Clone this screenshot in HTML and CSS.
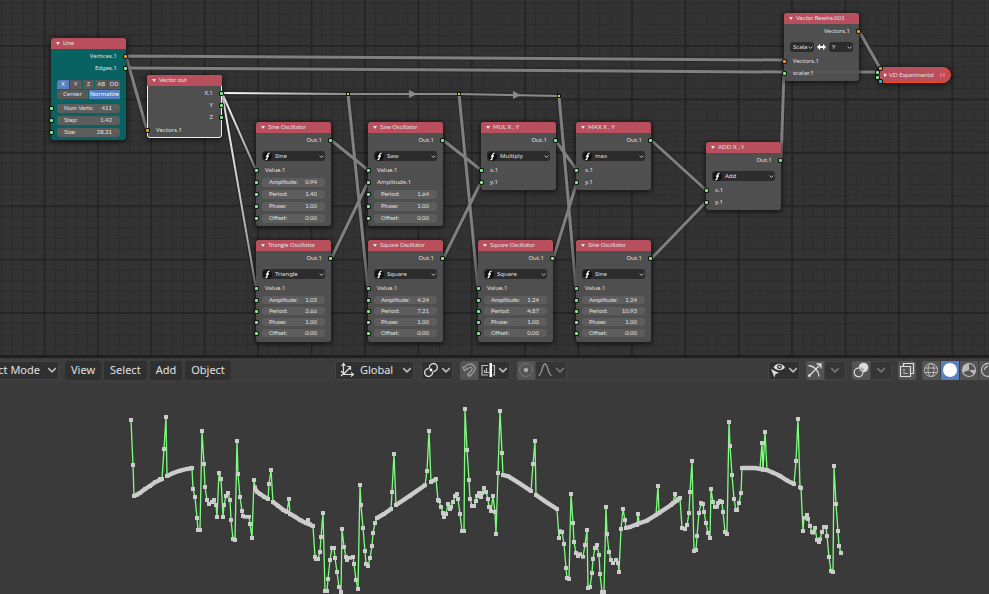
FILE: index.html
```html
<!DOCTYPE html>
<html lang="en">
<head>
<meta charset="utf-8">
<title>Node editor and 3D viewport</title>
<link rel="stylesheet" href="styles.css">
</head>
<body>
<svg class="symbols" aria-hidden="true">
  <symbol id="fn" viewBox="0 0 10 10"><circle cx="5" cy="5" r="5" fill="#111"/><path d="M7.3 1.6C5.800 1.200 5.400 2 5.200 3.300L4.500 7.200C4.300 8.300 3.600 8.700 2.800 8.300M3.200 4.500H6.700" fill="none" stroke="#fff" stroke-width="1.500"/></symbol>
  <symbol id="chev" viewBox="0 0 8 8"><path d="M1 2.500L4 5.500L7 2.500" fill="none" stroke="currentColor" stroke-width="1.300"/></symbol>
</svg>
<main class="app">
  <section class="node-editor" aria-label="Node editor">
    <svg class="links" width="100%" height="100%" aria-hidden="true">
      <defs>
        <pattern id="grid" x="44.500" y="46" width="53.400" height="53.400" patternUnits="userSpaceOnUse">
          <path d="M10.700 0V53.400M21.400 0V53.400M32 0V53.400M42.700 0V53.400M0 10.700H53.400M0 21.400H53.400M0 32H53.400M0 42.700H53.400" stroke="#2b2b2b" stroke-width="1"/>
          <path d="M0 0V53.400M53.400 0V53.400M0 0H53.400M0 53.400H53.400" stroke="#202020" stroke-width="1.400"/>
        </pattern>
        <linearGradient id="fade" gradientUnits="userSpaceOnUse" x1="222" y1="0" x2="348" y2="0"><stop offset="0" stop-color="#fff"/><stop offset="1" stop-color="#8a8a8a"/></linearGradient>
        <linearGradient id="fadeDown" gradientUnits="userSpaceOnUse" x1="222" y1="0" x2="256" y2="0"><stop offset="0" stop-color="#fff"/><stop offset="1" stop-color="#8a8a8a"/></linearGradient>
      </defs>
      <rect width="100%" height="100%" fill="url(#grid)"/>
      <g fill="none">
        <path class="wire-edge" d="M126 56L784 60M126 68L784 72H877M126 56L147 130M222 93L348 94H459L559 96M222 93L256 170M222 93L256 288M348 94L368 288M459 94L478 288M559 96L576 288M331 140L368 170M331 259L368 182M443 140L481 170M443 259L481 182M555 140L577 170M553 259L577 182M651 140L706 190M651 259L706 202M781 161L784 72M859 31L880 68"/>
        <path class="wire" d="M126 56L784 60M126 68L784 72H877M126 56L147 130M348 94L368 288M459 94L478 288M559 96L576 288M331 140L368 170M331 259L368 182M443 140L481 170M443 259L481 182M555 140L577 170M553 259L577 182M651 140L706 190M651 259L706 202M781 161L784 72M859 31L880 68"/>
        <path d="M348 94H459L559 96" stroke="#8a8a8a" stroke-width="2"/>
        <path d="M222 93L348 94" stroke="url(#fade)" stroke-width="2"/>
        <path d="M222 93L256 170M222 93L256 288" stroke="url(#fadeDown)" stroke-width="2"/>
      </g>
      <path d="M409 90L417 94L409 98ZM513 91L521 95L513 99Z" fill="#8a8a8a"/>
      <g fill="#d6d65a" stroke="#111"><rect x="346.500" y="92.500" width="3" height="3"/><rect x="457.500" y="92.500" width="3" height="3"/><rect x="557.500" y="94.500" width="3" height="3"/></g>
    </svg>

    <article class="node teal at-line">
      <h2>Line</h2>
      <div class="body">
        <p class="row out vec">Vertices.1</p>
        <p class="row out">Edges.1</p>
        <div class="toggles">
          <div><button class="on">X</button><button>Y</button><button>Z</button><button>AB</button><button>OD</button></div>
          <div><button>Center</button><button class="on">Normalize</button></div>
        </div>
        <label class="row in field">Num Verts:<input value="411"></label>
        <label class="row in field">Step:<input value="1.42"></label>
        <label class="row in field">Size:<input value="28.31"></label>
      </div>
    </article>

    <article class="node selected at-vector-out">
      <h2>Vector out</h2>
      <div class="body">
        <p class="row out">X.1</p>
        <p class="row out">Y</p>
        <p class="row out">Z</p>
        <p class="row in vec">Vectors.1</p>
      </div>
    </article>

    <article class="node at-sine">
      <h2>Sine Oscillator</h2>
      <div class="body">
        <p class="row out">Out.1</p>
        <div class="pick"><svg class="fn"><use href="#fn"/></svg><select aria-label="Function"><option>Sine</option></select><svg class="chev"><use href="#chev"/></svg></div>
        <p class="row in">Value.1</p>
        <label class="row in field">Amplitude:<input value="0.94"></label>
        <label class="row in field">Period:<input value="1.40"></label>
        <label class="row in field">Phase:<input value="1.00"></label>
        <label class="row in field">Offset:<input value="0.00"></label>
      </div>
    </article>

    <article class="node at-saw">
      <h2>Saw Oscillator</h2>
      <div class="body">
        <p class="row out">Out.1</p>
        <div class="pick"><svg class="fn"><use href="#fn"/></svg><select aria-label="Function"><option>Saw</option></select><svg class="chev"><use href="#chev"/></svg></div>
        <p class="row in">Value.1</p>
        <p class="row in">Amplitude.1</p>
        <label class="row in field">Period:<input value="1.64"></label>
        <label class="row in field">Phase:<input value="1.00"></label>
        <label class="row in field">Offset:<input value="0.00"></label>
      </div>
    </article>

    <article class="node at-mul">
      <h2>MUL X , Y</h2>
      <div class="body">
        <p class="row out">Out.1</p>
        <div class="pick"><svg class="fn"><use href="#fn"/></svg><select aria-label="Function"><option>Multiply</option></select><svg class="chev"><use href="#chev"/></svg></div>
        <p class="row in">x.1</p>
        <p class="row in">y.1</p>
      </div>
    </article>

    <article class="node at-max">
      <h2>MAX X , Y</h2>
      <div class="body">
        <p class="row out">Out.1</p>
        <div class="pick"><svg class="fn"><use href="#fn"/></svg><select aria-label="Function"><option>max</option></select><svg class="chev"><use href="#chev"/></svg></div>
        <p class="row in">x.1</p>
        <p class="row in">y.1</p>
      </div>
    </article>

    <article class="node compact at-triangle">
      <h2>Triangle Oscillator</h2>
      <div class="body">
        <p class="row out">Out.1</p>
        <div class="pick"><svg class="fn"><use href="#fn"/></svg><select aria-label="Function"><option>Triangle</option></select><svg class="chev"><use href="#chev"/></svg></div>
        <p class="row in">Value.1</p>
        <label class="row in field">Amplitude:<input value="1.03"></label>
        <label class="row in field">Period:<input value="2.66"></label>
        <label class="row in field">Phase:<input value="1.00"></label>
        <label class="row in field">Offset:<input value="0.00"></label>
      </div>
    </article>

    <article class="node compact at-square-a">
      <h2>Square Oscillator</h2>
      <div class="body">
        <p class="row out">Out.1</p>
        <div class="pick"><svg class="fn"><use href="#fn"/></svg><select aria-label="Function"><option>Square</option></select><svg class="chev"><use href="#chev"/></svg></div>
        <p class="row in">Value.1</p>
        <label class="row in field">Amplitude:<input value="4.24"></label>
        <label class="row in field">Period:<input value="7.21"></label>
        <label class="row in field">Phase:<input value="1.00"></label>
        <label class="row in field">Offset:<input value="0.00"></label>
      </div>
    </article>

    <article class="node compact at-square-b">
      <h2>Square Oscillator</h2>
      <div class="body">
        <p class="row out">Out.1</p>
        <div class="pick"><svg class="fn"><use href="#fn"/></svg><select aria-label="Function"><option>Square</option></select><svg class="chev"><use href="#chev"/></svg></div>
        <p class="row in">Value.1</p>
        <label class="row in field">Amplitude:<input value="1.24"></label>
        <label class="row in field">Period:<input value="4.87"></label>
        <label class="row in field">Phase:<input value="1.00"></label>
        <label class="row in field">Offset:<input value="0.00"></label>
      </div>
    </article>

    <article class="node compact at-sine-b">
      <h2>Sine Oscillator</h2>
      <div class="body">
        <p class="row out">Out.1</p>
        <div class="pick"><svg class="fn"><use href="#fn"/></svg><select aria-label="Function"><option>Sine</option></select><svg class="chev"><use href="#chev"/></svg></div>
        <p class="row in">Value.1</p>
        <label class="row in field">Amplitude:<input value="1.24"></label>
        <label class="row in field">Period:<input value="10.93"></label>
        <label class="row in field">Phase:<input value="1.00"></label>
        <label class="row in field">Offset:<input value="0.00"></label>
      </div>
    </article>

    <article class="node at-add">
      <h2>ADD X , Y</h2>
      <div class="body">
        <p class="row out">Out.1</p>
        <div class="pick"><svg class="fn"><use href="#fn"/></svg><select aria-label="Function"><option>Add</option></select><svg class="chev"><use href="#chev"/></svg></div>
        <p class="row in">x.1</p>
        <p class="row in">y.1</p>
      </div>
    </article>

    <article class="node at-rewire">
      <h2>Vector Rewire.001</h2>
      <div class="body">
        <p class="row out vec">Vectors.1</p>
        <div class="swap">
          <div class="pick"><select aria-label="From"><option>Scala</option></select><svg class="chev"><use href="#chev"/></svg></div>
          <svg class="arrows" viewBox="0 0 9 6"><path d="M0 3L3 0V2H6V0L9 3L6 6V4H3V6Z" fill="#fff"/></svg>
          <div class="pick"><select aria-label="To"><option>Y</option></select><svg class="chev"><use href="#chev"/></svg></div>
        </div>
        <p class="row in vec">Vectors.1</p>
        <p class="row in">scalar.1</p>
      </div>
    </article>

    <article class="collapsed">
      <i class="dot d1"></i><i class="dot d2"></i><i class="dot d3"></i><i class="dot d4"></i>
      <h2>VD Experimental</h2>
      <span class="grip"></span>
    </article>
  </section>

  <section class="viewport" aria-label="3D viewport">
    <header class="bar">
      <nav class="group menus">
        <div class="drop mode"><select aria-label="Mode"><option>Object Mode</option></select><svg class="chev"><use href="#chev"/></svg></div>
        <button>View</button><button>Select</button><button>Add</button><button>Object</button>
      </nav>
      <div class="group tools">
        <div class="drop orient">
          <svg class="icon" viewBox="0 0 16 16"><path d="M4.500 2V12.500H14M4.500 12.500L11 5.500M2.500 4L4.500 1.500L6.500 4M12 10.500L14.500 12.500L12 14.500M8 4.500H11.500V8M2 9L4.500 11.500L2 14" fill="none" stroke="#ddd" stroke-width="1.200"/></svg>
          <select aria-label="Orientation"><option>Global</option></select><svg class="chev"><use href="#chev"/></svg>
        </div>
        <button class="drop" aria-label="Pivot point"><svg class="icon" viewBox="0 0 16 16"><circle cx="8" cy="8" r="1.400" fill="#fff"/><path d="M6.500 6.500A4 4 0 1 1 10.500 9.500M9.500 9.500A4 4 0 1 1 5.500 6.500" fill="none" stroke="#ddd" stroke-width="1.300"/></svg><svg class="chev"><use href="#chev"/></svg></button>
        <div class="joined">
          <button class="lit" aria-label="Snap"><svg class="icon" viewBox="0 0 16 16"><path d="M2 5.500L7 2.500C12 0.500 16 5.500 13 9.500L8.500 14.500L6.500 12.500L10.500 8.500C12 6 10 4.500 8.500 5.500L3.500 8.500Z" fill="none" stroke="#999" stroke-width="1.300"/><path d="M4 4.500L5.500 7M7 12L9 14" stroke="#999"/></svg></button>
          <button class="drop" aria-label="Snapping"><svg class="icon" viewBox="0 0 16 16"><path d="M8 3.500H2V13H8M12.500 3.500H14.500V13H12.500M4.500 10.500V8M6.500 10.500V6M4 10.500H9" fill="none" stroke="#bbb" stroke-width="1.200"/><path d="M9.500 1H12V15H9.500Z" fill="#fff"/></svg><svg class="chev"><use href="#chev"/></svg></button>
        </div>
        <div class="joined">
          <button class="lit" aria-label="Proportional editing"><svg class="icon" viewBox="0 0 16 16"><circle cx="8" cy="8" r="6.500" fill="none" stroke="#777"/><circle cx="8" cy="8" r="2.200" fill="#aaa"/></svg></button>
          <button class="drop dim" aria-label="Falloff"><svg class="icon" viewBox="0 0 16 16"><path d="M1.500 13.500C5 13.500 5 2 8 2S11 13.500 14.500 13.500" fill="none" stroke="#999" stroke-width="1.300"/></svg><svg class="chev"><use href="#chev"/></svg></button>
        </div>
      </div>
      <div class="group views">
        <button class="drop" aria-label="Visibility"><svg class="icon" viewBox="0 0 16 16"><path d="M3.500 5.500C6 0.500 12 0.500 15 5.500C12 9 7 9 3.500 5.500Z" fill="#ddd"/><circle cx="9.500" cy="4.800" r="2.400" fill="#2d2d2d"/><circle cx="9.500" cy="4.800" r="1.100" fill="#ddd"/><path d="M1 7L9 11L5.500 12L4.500 15.500Z" fill="#ddd"/></svg><svg class="chev"><use href="#chev"/></svg></button>
        <div class="joined">
          <button class="lit" aria-label="Gizmos"><svg class="icon" viewBox="0 0 16 16"><path d="M1.500 3.500C7 4 11.500 8 12 14.500M2 14L14 2M9.500 2H14V6.500" fill="none" stroke="#ddd" stroke-width="1.300"/><circle cx="2.500" cy="13.500" r="1.500" fill="#ddd"/></svg></button>
          <button class="drop dim" aria-label="Gizmo options"><svg class="chev"><use href="#chev"/></svg></button>
        </div>
        <div class="joined">
          <button class="lit" aria-label="Overlays"><svg class="icon" viewBox="0 0 16 16"><circle cx="10.500" cy="5.500" r="4.800" fill="#ddd"/><circle cx="5.500" cy="10.500" r="4.300" fill="none" stroke="#ddd" stroke-width="1.200"/><path d="M6 6.500L9.500 10M8 5.500L10.500 8" stroke="#545454" stroke-width="1"/></svg></button>
          <button class="drop dim" aria-label="Overlay options"><svg class="chev"><use href="#chev"/></svg></button>
        </div>
        <button class="lit" aria-label="X-ray"><svg class="icon" viewBox="0 0 16 16"><path d="M4.500 4.500V1.500H14.500V11.500H11.500M1.500 4.500H11.500V14.500H1.500Z" fill="none" stroke="#ddd" stroke-width="1.200"/><path d="M5 7V11.500H9" fill="none" stroke="#ddd" stroke-dasharray="2 1"/></svg></button>
        <div class="joined shading">
          <button class="lit" aria-label="Wireframe"><svg class="icon" viewBox="0 0 16 16"><g fill="none" stroke="#bbb"><circle cx="8" cy="8" r="6.500"/><ellipse cx="8" cy="8" rx="3" ry="6.500"/><path d="M2 6H14M2 10.500H14"/></g></svg></button>
          <button class="on" aria-label="Solid"><svg class="icon" viewBox="0 0 16 16"><circle cx="8" cy="8" r="7" fill="#fff"/></svg></button>
          <button class="lit" aria-label="Material preview"><svg class="icon" viewBox="0 0 16 16"><circle cx="8" cy="8" r="6.500" fill="none" stroke="#bbb" stroke-width="1.200"/><path d="M8 1.500A6.500 6.500 0 0 0 2 10.500L8 8L13 12.500A6.500 6.500 0 0 0 14.500 8H8Z" fill="#bbb"/></svg></button>
          <button class="lit" aria-label="Rendered"><svg class="icon" viewBox="0 0 16 16"><circle cx="8" cy="8" r="6.500" fill="none" stroke="#bbb" stroke-width="1.300"/><path d="M4.500 8A3.500 3.500 0 0 1 8 4.500" fill="none" stroke="#bbb" stroke-width="1.300"/></svg></button>
        </div>
      </div>
    </header>

    <svg class="wave" viewBox="0 0 2967 636" role="img" aria-label="Oscillator line">
      <defs><marker id="v" viewBox="0 0 12 12" refX="6" refY="6" markerWidth="12" markerHeight="12" markerUnits="userSpaceOnUse"><rect width="12" height="12" fill="#ccc"/></marker></defs>
      <g transform="translate(360 54)">
        <polyline class="edge" points="33,60 39,195 42,288 51,284 60,279 75,267 90,258 105,247 120,237 126,237 132,147 138,51 141,228 160,219 180,212 200,207 216,204 219,267 225,291 231,354 234,390 240,390 246,93 252,192 255,261 261,300 267,312 276,306 282,300 288,315 291,351 297,219 303,237 309,351 312,315 318,288 324,279 330,300 333,360 339,417 345,420 351,123 354,222 360,291 366,333 369,348 375,350 387,350 390,372 396,414 402,240 405,262 411,275 420,282 432,290 444,297 447,252 453,210 459,306 475,318 490,330 501,336 507,297 510,342 525,350 540,360 558,369 564,360 570,373 579,378 585,471 588,477 594,477 600,456 603,411 609,339 615,573 621,573 624,537 630,480 636,444 642,444 645,474 651,516 657,561 663,576 666,387 672,441 678,471 681,480 690,473 699,471 702,492 708,540 714,567"/>
        <path class="dense" d="M42 288L60 279L75 267L90 258L105 247L126 237M141 228L160 219L180 212L200 207L216 204M405 265L411 275L420 282L432 290L444 297M459 306L475 318L490 330L501 336M510 342L525 350L540 360L558 369L579 378"/>
      </g>
      <g transform="translate(1050 54)">
        <polyline class="edge" points="24,567 30,255 33,315 39,384 45,453 48,492 54,498 60,474 66,438 69,399 75,369 81,354 102,342 123,327 126,276 132,162 138,315 180,287 225,256 231,213 237,93 243,246 258,237 264,300 267,303 273,321 279,339 282,351 288,342 294,312 300,327 303,321 309,306 315,288 321,282 324,297 330,342 336,393 342,393 345,27 351,150 357,240 360,297 366,318 372,318 378,303 381,288 387,279 393,291 396,279 402,264 408,276 414,297 417,321 423,333 429,288 435,336 438,402 444,219 450,33 456,159 459,225 475,229 543,273 549,192 555,123 558,285 621,327 627,414 630,394 636,396 642,432 648,504 651,534 657,537 663,282 669,369 672,426 678,459 684,468 690,463 699,470 705,435 711,390 714,564"/>
        <path class="dense" d="M81 354L102 342L123 327M138 315L180 287L225 256M243 246L258 237M459 225L475 229L510 251L543 273M558 285L590 307L621 327"/>
      </g>
      <g transform="translate(1710 54)">
        <polyline class="edge" points="54,564 60,561 66,519 69,477 75,444 81,435 87,465 90,522 96,576 102,576 108,321 111,402 117,456 123,480 129,489 138,480 144,489 147,516 153,387 159,327 165,360 168,384 180,381 201,375 204,342 208,369 230,362 258,345 264,258 267,339 303,315 309,308 315,282 320,302 330,294 336,384 345,387 351,375 357,339 360,276 366,183 372,453 378,450 381,408 387,339 393,309 399,312 402,336 408,369 414,399 420,414 423,267 429,306 435,321 441,320 444,309 450,303 456,306 459,336 465,396 471,402 477,66 480,138 486,225 492,297 498,330 501,330 507,309 513,279 516,204 555,204 570,208 576,129 579,209 585,96 591,210 610,218 630,228 650,241 672,252 678,183 684,57 690,262 693,264 699,393 702,353 711,345 714,357 720,378 726,396 730,398 735,384 741,420 747,426 750,418 756,396 762,381 768,381 771,408 777,471 783,513 789,516 792,198 798,312 804,393 807,438 813,459"/>
        <path class="dense" d="M168 384L180 381L208 370L230 362L258 345L303 315L330 294M516 204H555L590 210L610 218L630 228L650 241L672 252"/>
      </g>
    </svg>
  </section>
</main>
</body>
</html>
```
FILE: styles.css
```css
* { box-sizing: border-box; }
body { margin: 0; background: #3a3a3a; color: #e0e0e0; font-family: "Noto Sans", sans-serif; }
h2, p { margin: 0; font-weight: 400; }
button, select, input { margin: 0; padding: 0; border: 0; background: none; color: inherit; font: inherit; appearance: none; outline: 0; }
.symbols { position: absolute; width: 0; height: 0; }
.app { display: flex; flex-direction: column; height: 100vh; overflow: hidden; }

/* Node editor */
.node-editor { position: relative; flex: 0 0 358px; overflow: hidden; background: #333; border-bottom: 3px solid #1f1f1f; }
.links { display: block; }
.wire-edge { stroke: #222; stroke-width: 5; stroke-opacity: .5; }
.wire { stroke: #808080; stroke-width: 3; }

.node { position: absolute; width: 75px; border-radius: 3px; background: rgba(82, 82, 82, .93); box-shadow: 0 1px 5px 1px rgba(0, 0, 0, .6); font-size: 6px; line-height: 12px; }
.node h2 { height: 11px; padding-left: 12px; border-radius: 3px 3px 0 0; background: #b94f5c; font-family: Lato, sans-serif; font-size: 6px; line-height: 10px; white-space: nowrap; position: relative; }
.node h2::before { content: ""; position: absolute; left: 5px; top: 4px; border: 2px solid transparent; border-top: 3px solid #e6e6e6; border-bottom: 0; }
.body { padding: 1px 0 2px; }
.teal { background: #086262; }
.selected { outline: 1px solid #eee; outline-offset: -1px; }
.selected .in { margin-top: 1px; }

.row { position: relative; display: block; height: 12px; padding: 0 9px; }
.out { text-align: right; }
.in::before, .out::after, .dot { content: ""; position: absolute; top: 5px; width: 3px; height: 3px; border-radius: 1px; background: #7df08a; box-shadow: 0 0 0 1px #111; z-index: 1; }
.in::before { left: -1px; }
.out::after { right: -1px; }
.vec::before, .vec::after { background: #ea9a28; }

.field { display: flex; justify-content: space-between; padding: 0 14px 0 13px; font-family: Lato, sans-serif; white-space: nowrap; isolation: isolate; }
.field::after { content: ""; position: absolute; inset: 2px 6px 1px; border-radius: 3px; background: #5d5d5d; z-index: -1; }
.field input { width: 16px; height: 12px; text-align: right; }
.compact .field { height: 11px; line-height: 11px; }
.compact .field input { height: 11px; }
.compact .body { padding-bottom: 4px; }

.pick { position: relative; display: flex; align-items: center; height: 10px; margin: 5px 6px 3px; border-radius: 3px; background: #2c2c2c; }
.pick .fn { width: 9px; height: 9px; margin: 0 3px 0 1px; flex: none; }
.pick select { flex: 1; min-width: 0; height: 10px; line-height: 10px; }
.pick .chev { position: absolute; right: 1px; top: 3px; width: 5px; height: 5px; }
.swap { display: flex; align-items: center; gap: 3px; margin: 5px 6px 3px; }
.swap .pick { flex: 1; margin: 0; padding-left: 3px; }
.arrows { width: 9px; height: 6px; flex: none; }

.toggles { margin: 6px 6px 2px; border-radius: 3px; overflow: hidden; line-height: 9px; }
.toggles div { display: flex; gap: 1px; margin-bottom: 1px; }
.toggles button { flex: 1; height: 9px; background: #595959; }
.toggles .on, .shading .on { background: #5680c2; color: #fff; }

.at-line { left: 51px; top: 38px; }
.at-vector-out { left: 147px; top: 75px; }
.at-sine { left: 256px; top: 122px; }
.at-saw { left: 368px; top: 122px; }
.at-mul { left: 481px; top: 122px; }
.at-max { left: 576px; top: 122px; }
.at-triangle { left: 256px; top: 240px; }
.at-square-a { left: 368px; top: 240px; }
.at-square-b { left: 478px; top: 240px; }
.at-sine-b { left: 576px; top: 240px; }
.at-add { left: 706px; top: 142px; }
.at-rewire { left: 784px; top: 13px; }

.collapsed { position: absolute; left: 877px; top: 67px; display: flex; align-items: center; justify-content: space-between; width: 74px; height: 16px; padding: 0 5px 0 11px; border: 1px solid #f5460f; border-radius: 8px; background: #b94f5c; box-shadow: 0 1px 6px 1px rgba(0, 0, 0, .6); font-size: 6px; line-height: 14px; }
.collapsed h2 { font-family: Lato, sans-serif; font-size: 6px; white-space: nowrap; }
.collapsed h2::before { content: ""; position: absolute; left: 6px; top: 5px; border: 2px solid transparent; border-left: 3px solid #eee; border-right: 0; }
.grip { width: 5px; height: 4px; border: solid #ff5e68; border-width: 0 2px; }
.d1 { left: 1px; top: -1px; background: #ea9a28; }
.d2 { left: -2px; top: 3px; }
.d3 { left: -2px; top: 8px; }
.d4 { left: 1px; top: 12px; background: #3fb5c5; }

/* 3D viewport */
.viewport { flex: 1; min-height: 0; display: flex; flex-direction: column; }
.bar { display: flex; justify-content: space-between; align-items: center; flex: none; height: 24px; overflow: hidden; background: #3c3c3c; font-size: 11px; line-height: 17px; }
.group, .joined, .drop { display: flex; align-items: center; flex: none; }
.menus { gap: 3px; margin-left: -36px; }
.menus button { padding: 0 6px 2px; }
.tools { gap: 7px; margin-right: 97px; }
.views { gap: 6px; margin-right: -8px; }
.bar button, .drop { height: 19px; border-radius: 3px; background: #303030; }
.drop { position: relative; gap: 2px; padding: 0 2px; box-shadow: inset 0 0 0 1px #454545; }
.drop .chev { width: 10px; height: 10px; flex: none; color: #bbb; }
.drop.dim { background: #353535; }
.dim .chev { color: #777; }
.dim .chev:first-child { margin: 0 4px; }
.drop select { height: 19px; padding-bottom: 2px; }
.mode { width: 95px; margin-right: 3px; }
.mode select { flex: 1; text-align-last: right; padding-right: 5px; }
.orient { width: 79px; padding-left: 4px; }
.orient select { flex: 1; min-width: 0; padding-left: 3px; }
.icon { display: block; width: 16px; height: 16px; flex: none; }
.bar .lit, .bar .on { width: 18px; padding: 0 1px; background: #545454; }
.bar .shading .on { background: #5680c2; }
.joined button:first-child { border-radius: 3px 0 0 3px; }
.joined button + button { border-radius: 0 3px 3px 0; }
.shading { gap: 1px; }
.shading button + button { border-radius: 0; }
.wave { display: block; flex: 1; min-height: 0; width: 100%; }
.edge { fill: none; stroke: #7bfc7b; stroke-width: 4; marker-start: url(#v); marker-mid: url(#v); marker-end: url(#v); }
.dense { fill: none; stroke: #ccc; stroke-width: 13; }
```
